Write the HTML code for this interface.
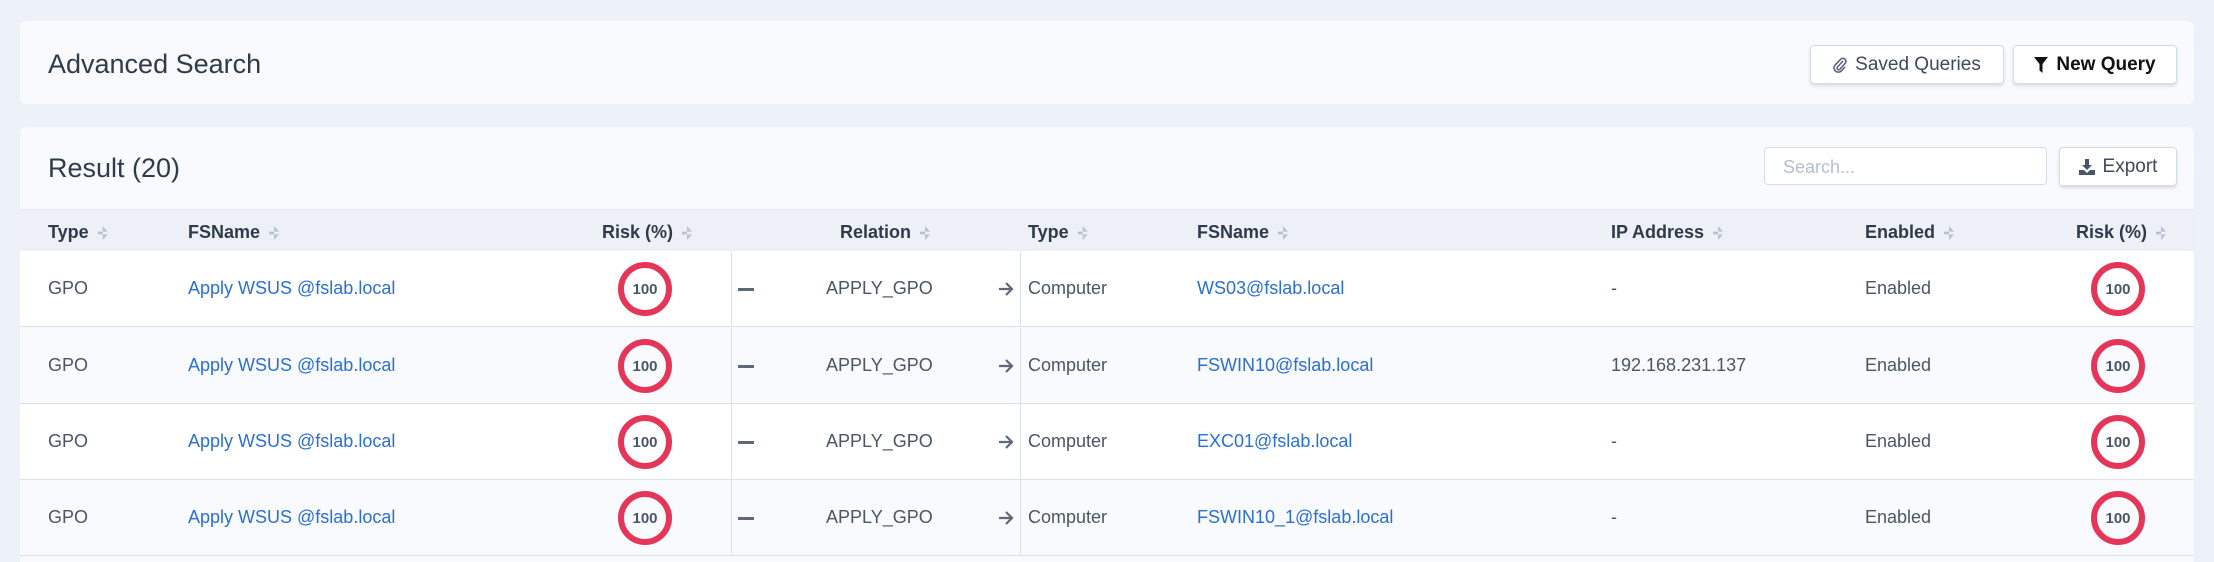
<!DOCTYPE html>
<html style="width:2214px;height:562px;overflow:hidden"><head><meta charset="utf-8"><style>
*{box-sizing:border-box;margin:0;padding:0}
body{width:2214px;height:562px;background:#edf1f8;font-family:"Liberation Sans",sans-serif;position:relative;overflow:hidden;color:#3f4a5a}
.card{position:absolute;left:20px;width:2174px;background:#f8fafd;border-radius:6px}
.abs{position:absolute;white-space:nowrap}
.btn{position:absolute;background:#fff;border:1px solid #d5dbe5;border-radius:4px;box-shadow:0 2px 3px rgba(0,0,0,.12);font-size:19px;display:flex;align-items:center;justify-content:center;gap:8px}
.title{font-size:27px;color:#2f3a4a}
.hdr{position:absolute;left:0;top:82px;width:2174px;height:42px;background:#edf1f7;border-top:1px solid #e2e7ef}
.th{position:absolute;top:12px;font-size:18px;color:#2f3a4a;font-weight:bold;white-space:nowrap}
.th::after{content:"";display:inline-block;width:10px;height:14px;margin-left:9px;vertical-align:-2px;
 clip-path:polygon(50% 0,100% 40%,0 40%,0 60%,100% 60%,50% 100%);background:#b9c2cf}
.row{position:absolute;left:0;width:2174px;height:76px;border-bottom:1px solid #dbe2ec}
.td{position:absolute;top:27px;font-size:18px;color:#4a5566;white-space:nowrap}
.lnk{color:#2a6fd8}
.circ{position:absolute;top:11px;width:54px;height:54px;border:6px solid #e53558;border-radius:50%;font-size:15px;font-weight:bold;color:#4a5566;display:flex;align-items:center;justify-content:center}
.vl{position:absolute;top:0;height:76px;width:1px;background:#dbe2ec}
</style></head><body>
<div class="card" style="top:21px;height:83px">
 <div class="abs title" style="left:28px;top:28px">Advanced Search</div>
 <div class="btn" style="left:1790px;top:24px;width:194px;height:39px;color:#3f4a5a"><svg width="14" height="18" viewBox="0 0 14 18"><path d="M10 5 L4.5 11 a1.6 1.6 0 0 0 2.3 2.3 L12 7.5 a3 3 0 0 0 -4.3 -4.3 L2.3 8.8 a4.3 4.3 0 0 0 6.1 6.1 L12 11" fill="none" stroke="#5a6576" stroke-width="1.6"/></svg>Saved Queries</div>
 <div class="btn" style="left:1993px;top:24px;width:164px;height:39px;color:#111;font-weight:bold"><svg width="14" height="16" viewBox="0 0 14 16"><path d="M0 0H14L8.5 7V16L5.5 13.5V7Z" fill="#111"/></svg>New Query</div>
</div>
<div class="card" style="top:127px;height:435px;border-radius:6px 6px 0 0;overflow:hidden">
 <div class="abs title" style="left:28px;top:26px">Result (20)</div>
 <div class="abs" style="left:1744px;top:20px;width:283px;height:38px;background:#fff;border:1px solid #d5dde8;border-radius:4px;font-size:18px;color:#b5bfcc;padding:9px 18px">Search...</div>
 <div class="btn" style="left:2039px;top:20px;width:118px;height:39px"><svg width="16" height="16" viewBox="0 0 16 16"><path d="M6 0H10V6H13L8 11L3 6H6Z M0 11H5L8 14L11 11H16V16H0Z" fill="#4a5566"/></svg>Export</div>
 <div class="hdr">
  <div class="th" style="left:28px">Type</div>
  <div class="th" style="left:168px">FSName</div>
  <div class="th" style="left:582px">Risk (%)</div>
  <div class="th" style="left:820px">Relation</div>
  <div class="th" style="left:1008px">Type</div>
  <div class="th" style="left:1177px">FSName</div>
  <div class="th" style="left:1591px">IP Address</div>
  <div class="th" style="left:1845px">Enabled</div>
  <div class="th" style="left:2056px">Risk (%)</div>
 </div>
 <div style="position:absolute;left:0;top:124px;width:2174px">
  <div class="row" style="top:0;background:#fff"></div>
  <div class="row" style="top:77px;background:#f8fafd"></div>
  <div class="row" style="top:153px;background:#fff"></div>
  <div class="row" style="top:229px;background:#f8fafd"></div>
 </div>
 <div id="rows"></div>
</div>
<script>
var names=["WS03@fslab.local","FSWIN10@fslab.local","EXC01@fslab.local","FSWIN10_1@fslab.local"];
var ips=["-","192.168.231.137","-","-"];
var tops=[124,201,277,353],h="";
for(var i=0;i<4;i++){var t=tops[i];
h+='<div style="position:absolute;left:0;top:'+t+'px;width:2174px;height:76px">'+
'<div class="td" style="left:28px">GPO</div>'+
'<div class="td lnk" style="left:168px">Apply WSUS @fslab.local</div>'+
'<div class="circ" style="left:598px">100</div>'+
'<div class="vl" style="left:711px"></div>'+
'<div style="position:absolute;left:718px;top:37px;width:16px;height:3px;background:#5d6878"></div>'+
'<div class="td" style="left:806px">APPLY_GPO</div>'+
'<svg style="position:absolute;left:978px;top:31px" width="16" height="14" viewBox="0 0 16 14"><path d="M1 7H14M8 1L14 7L8 13" fill="none" stroke="#5d6878" stroke-width="2.2"/></svg>'+
'<div class="vl" style="left:1000px"></div>'+
'<div class="td" style="left:1008px">Computer</div>'+
'<div class="td lnk" style="left:1177px">'+names[i]+'</div>'+
'<div class="td" style="left:1591px">'+ips[i]+'</div>'+
'<div class="td" style="left:1845px">Enabled</div>'+
'<div class="circ" style="left:2071px">100</div></div>';}
document.getElementById("rows").innerHTML=h;
</script>
</body></html>
